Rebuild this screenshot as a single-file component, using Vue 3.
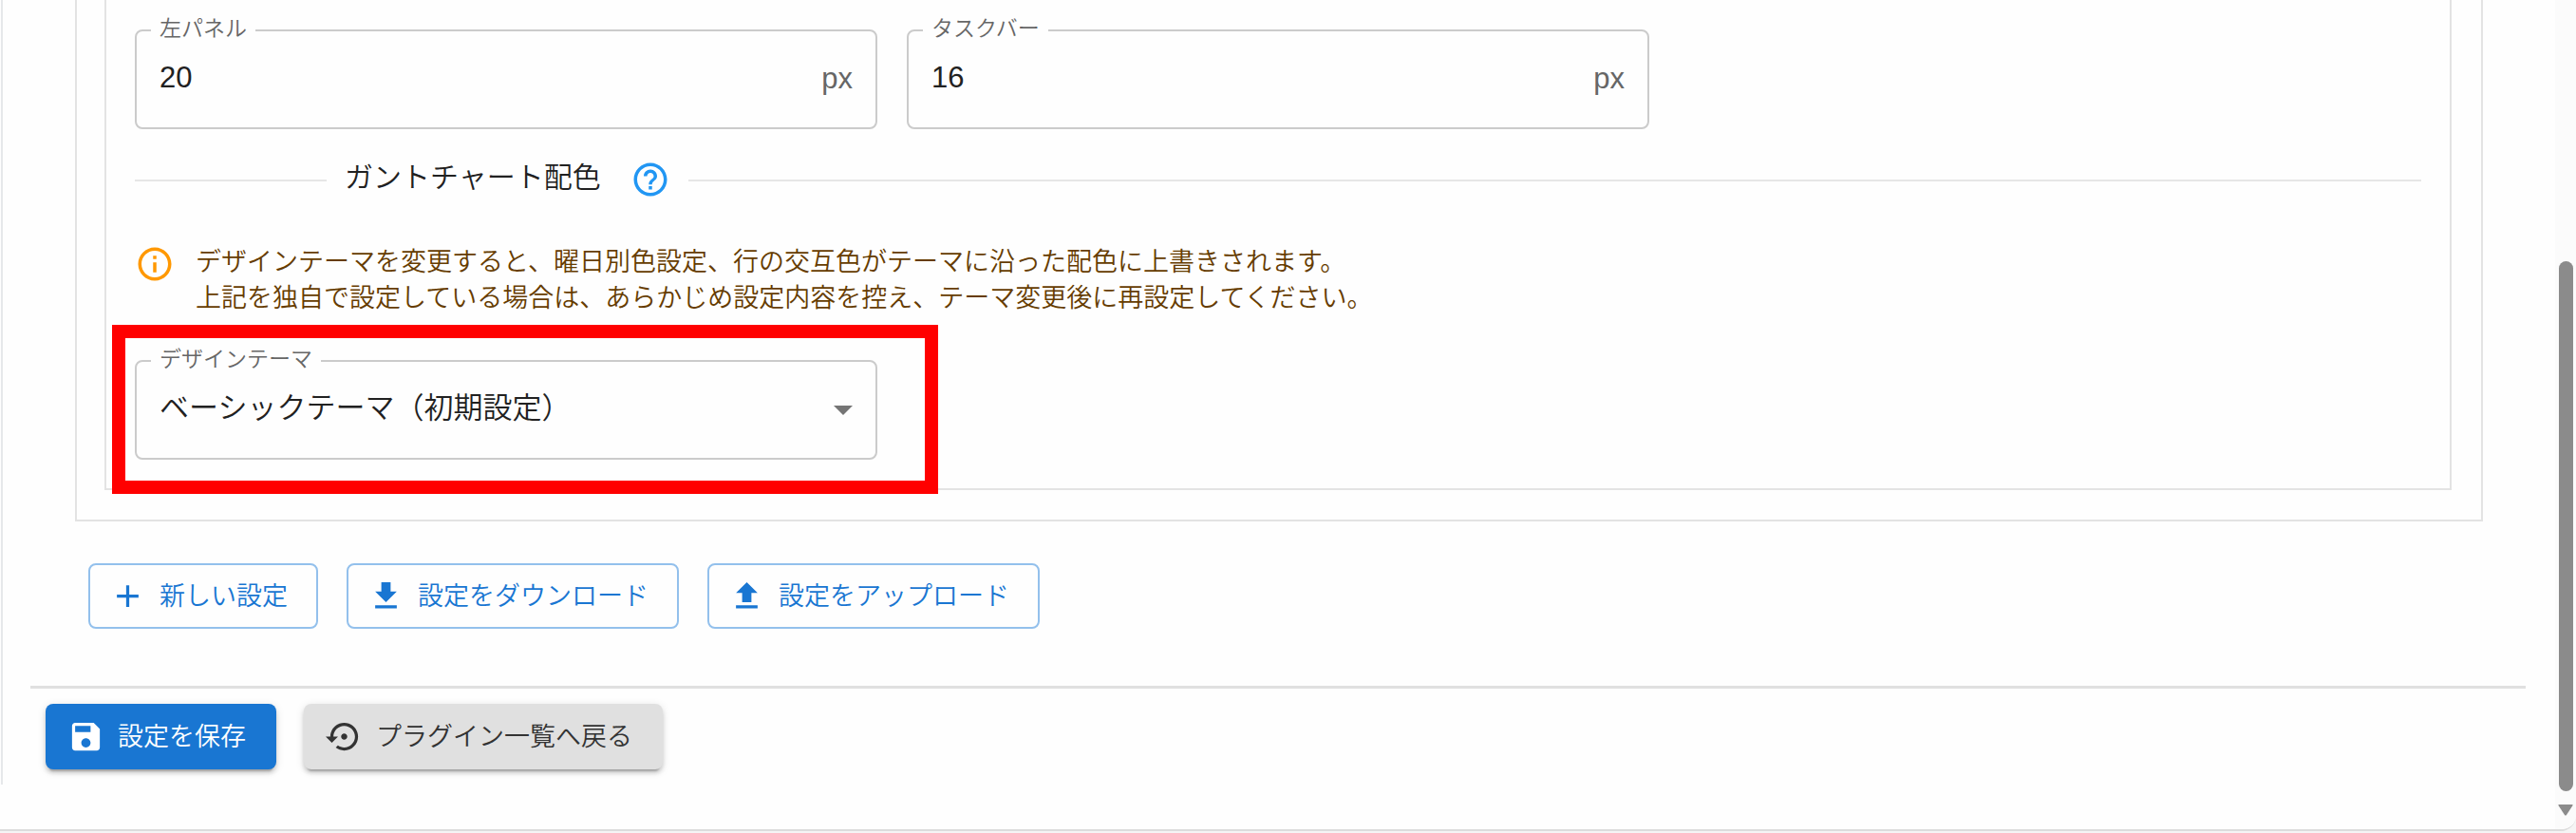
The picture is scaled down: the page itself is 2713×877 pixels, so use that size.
<script setup>
import { ref } from 'vue'

const leftPanel = ref('20')
const taskBar = ref('16')
const theme = ref('basic')
</script>

<template>
  <div class="window">
    <main class="page">
      <div class="content">
        <section class="outer">
          <div class="inner">
            <div class="fields">
              <div class="field">
                <label for="left-panel">左パネル</label>
                <input id="left-panel" v-model="leftPanel" type="text" inputmode="numeric" />
                <span class="unit">px</span>
              </div>
              <div class="field">
                <label for="task-bar">タスクバー</label>
                <input id="task-bar" v-model="taskBar" type="text" inputmode="numeric" />
                <span class="unit">px</span>
              </div>
            </div>

            <div class="divider">
              <h2>ガントチャート配色</h2>
              <button class="help" type="button" aria-label="ヘルプ">
                <svg viewBox="0 0 24 24" fill="currentColor"><path d="M11 18h2v-2h-2v2zm1-16C6.480 2 2 6.480 2 12s4.480 10 10 10 10-4.480 10-10S17.520 2 12 2zm0 18c-4.410 0-8-3.590-8-8s3.590-8 8-8 8 3.590 8 8-3.590 8-8 8zm0-14c-2.210 0-4 1.790-4 4h2c0-1.100.9-2 2-2s2 .9 2 2c0 2-3 1.750-3 5h2c0-2.250 3-2.500 3-5 0-2.210-1.790-4-4-4z" /></svg>
              </button>
            </div>

            <div class="notice" role="note">
              <svg viewBox="0 0 24 24" fill="currentColor"><path d="M11 7h2v2h-2zm0 4h2v6h-2zm1-9C6.480 2 2 6.480 2 12s4.480 10 10 10 10-4.480 10-10S17.520 2 12 2zm0 18c-4.410 0-8-3.590-8-8s3.590-8 8-8 8 3.590 8 8-3.590 8-8 8z" /></svg>
              <p>デザインテーマを変更すると、曜日別色設定、行の交互色がテーマに沿った配色に上書きされます。<br />上記を独自で設定している場合は、あらかじめ設定内容を控え、テーマ変更後に再設定してください。</p>
            </div>

            <div class="fields marked">
              <div class="field">
                <label for="theme">デザインテーマ</label>
                <select id="theme" v-model="theme">
                  <option value="basic">ベーシックテーマ（初期設定）</option>
                </select>
                <svg class="caret" viewBox="0 0 20 10" fill="currentColor"><path d="M0 0h20L10 10z" /></svg>
              </div>
              <div class="highlight" aria-hidden="true"></div>
            </div>
          </div>
        </section>

        <div class="actions">
          <button class="btn outlined" type="button">
            <svg viewBox="0 0 24 24" fill="currentColor"><path d="M19 13h-6v6h-2v-6H5v-2h6V5h2v6h6v2z" /></svg>
            新しい設定
          </button>
          <button class="btn outlined" type="button">
            <svg viewBox="0 0 24 24" fill="currentColor"><path d="M19 9h-4V3H9v6H5l7 7 7-7zM5 18v2h14v-2H5z" /></svg>
            設定をダウンロード
          </button>
          <button class="btn outlined" type="button">
            <svg viewBox="0 0 24 24" fill="currentColor"><path d="M9 16h6v-6h4l-7-7-7 7h4v6zm-4 2h14v2H5v-2z" /></svg>
            設定をアップロード
          </button>
        </div>

        <footer class="footer">
          <button class="btn primary" type="button">
            <svg viewBox="0 0 24 24" fill="currentColor"><path d="M17 3H5c-1.110 0-2 .9-2 2v14c0 1.100.89 2 2 2h14c1.100 0 2-.9 2-2V7l-4-4zm-5 16c-1.660 0-3-1.340-3-3s1.340-3 3-3 3 1.340 3 3-1.340 3-3 3zm3-10H5V5h10v4z" /></svg>
            設定を保存
          </button>
          <button class="btn neutral" type="button">
            <svg viewBox="0 0 24 24" fill="currentColor"><path d="M14 12c0-1.100-.9-2-2-2s-2 .9-2 2 .9 2 2 2 2-.9 2-2zm-2-9c-4.970 0-9 4.030-9 9H0l4 4 4-4H5c0-3.870 3.130-7 7-7s7 3.130 7 7-3.130 7-7 7c-1.510 0-2.910-.49-4.060-1.300l-1.420 1.440C8.040 20.300 9.940 21 12 21c4.970 0 9-4.030 9-9s-4.030-9-9-9z" /></svg>
            プラグイン一覧へ戻る
          </button>
        </footer>
      </div>
    </main>

    <div class="scrollbar" aria-hidden="true">
      <div class="thumb"></div>
      <svg viewBox="0 0 16 12" fill="currentColor"><path d="M1 0h14q1 0 .5 1L9 11q-1 1-2 0L.5 1Q0 0 1 0z" /></svg>
    </div>
  </div>
</template>

<style>
body {
  margin: 0;
  background: #f5f5f5;
}
</style>

<style scoped>
.window,
.window * {
  box-sizing: border-box;
}

.window {
  display: flex;
  overflow: hidden;
  border-bottom: 2px solid #dcdcdc;
  border-bottom-right-radius: 16px;
  background: #fefefe;
  color: #212121;
  font-family: "Liberation Sans", "Noto Sans CJK JP", sans-serif;
  font-size: 27px;
  font-weight: 350;
}

.page {
  flex: 1;
  padding: 0 31px 47px 1px;
}

.content {
  padding-left: 29px;
  border-left: 2px solid #e6e8ea;
}

.outer {
  margin: 0 45px 0 47px;
  padding: 0 31px 31px 29px;
  border: 2px solid #e3e3e3;
  border-top: 0;
}

.inner {
  padding: 31px 30px 30px;
  border: 2px solid #e3e3e3;
  border-top: 0;
}

.fields {
  display: grid;
  grid-template-columns: repeat(3, 1fr);
  gap: 31px;
}

.field {
  position: relative;
  display: flex;
  align-items: center;
  height: 105px;
  padding: 0 24px;
  border: 2px solid #cbcbcb;
  border-radius: 8px;
}

.field label {
  position: absolute;
  top: -19px;
  left: 15px;
  padding: 0 9px;
  background: #fefefe;
  color: #666;
  font-size: 23px;
  line-height: 32px;
}

.field input,
.field select {
  flex: 1;
  min-width: 0;
  height: 100%;
  margin: 0;
  padding: 0 0 4px;
  border: 0;
  outline: 0;
  background: transparent;
  color: inherit;
  font-family: inherit;
  font-size: 31px;
  font-weight: inherit;
  appearance: none;
}

.unit {
  padding-bottom: 2px;
  color: #666;
  font-size: 31px;
}

.caret {
  width: 20px;
  height: 10px;
  color: #757575;
}

.divider {
  display: flex;
  align-items: center;
  height: 46px;
  margin-top: 28px;
}

.divider::before,
.divider::after {
  content: "";
  flex: 1;
  height: 2px;
  margin-top: 6px;
  background: #e6e6e6;
}

.divider::before {
  flex: 0 0 202px;
  margin-right: 19px;
}

.divider::after {
  margin-left: 19px;
}

.divider h2 {
  margin: 0;
  font-size: 30px;
  font-weight: inherit;
  line-height: 46px;
}

.help {
  display: flex;
  margin: 4px 0 0 31px;
  padding: 0;
  border: 0;
  background: none;
  color: #2196f3;
}

.help svg,
.notice svg {
  width: 42px;
  height: 42px;
}

.notice {
  display: flex;
  gap: 22px;
  margin-top: 47px;
  color: #663c00;
}

.notice svg {
  color: #ff9800;
}

.notice p {
  margin: 0;
  line-height: 38px;
}

.marked {
  position: relative;
  margin-top: 46px;
}

.highlight {
  position: absolute;
  top: -37px;
  left: -24px;
  width: calc(33.33% + 67px);
  height: 178px;
  border: 14px solid #f00;
  pointer-events: none;
}

.actions {
  display: flex;
  gap: 30px;
  padding: 44px 61px 60px;
}

.footer {
  display: flex;
  gap: 29px;
  padding: 16px;
  border-top: 3px solid #e0e0e0;
}

.btn {
  display: flex;
  align-items: center;
  height: 69px;
  padding: 0 32px 0 23px;
  border: 0;
  border-radius: 8px;
  background: none;
  font-family: inherit;
  font-size: 27px;
  font-weight: inherit;
  line-height: 48px;
  white-space: nowrap;
}

.btn svg {
  width: 39px;
  height: 39px;
  margin-right: 14px;
}

.outlined {
  padding: 0 30px 0 20px;
  border: 2px solid #93c0ec;
  color: #1976d2;
}

.primary,
.neutral {
  box-shadow: 0 6px 2px -4px rgba(0, 0, 0, 0.2), 0 4px 4px rgba(0, 0, 0, 0.14), 0 2px 10px rgba(0, 0, 0, 0.12);
}

.primary {
  background: #1976d2;
  color: #fff;
}

.neutral {
  background: #e0e0e0;
  color: #333;
}

.scrollbar {
  display: flex;
  flex-direction: column;
  align-items: center;
  width: 22px;
  padding: 275px 0 14px;
  background: #fbfbfb;
  color: #8b8b8b;
}

.thumb {
  flex: 1;
  width: 15px;
  border-radius: 8px;
  background: #8b8b8b;
}

.scrollbar svg {
  width: 16px;
  height: 12px;
  margin-top: 14px;
}
</style>
